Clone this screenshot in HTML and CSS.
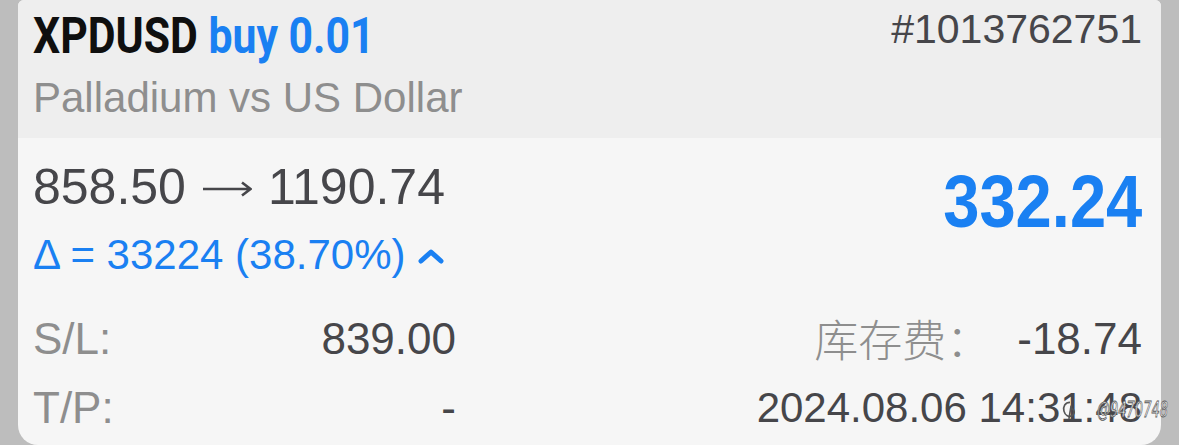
FILE: index.html
```html
<!DOCTYPE html>
<html lang="zh-CN">
<head>
    <meta charset="UTF-8">
    <title>XPDUSD</title>
    <link rel="stylesheet" href="styles.css">
</head>
<body>
    <div class="card">
        <div class="head">
            <div class="head-top">
                <div class="title"><span class="sym">XPDUSD</span> <span class="side">buy 0.01</span></div>
                <div class="ticket">#1013762751</div>
            </div>
            <div class="desc">Palladium vs US Dollar</div>
        </div>

        <div class="body">
            <div class="prices">
                <div class="left">
                    <div class="range">
                        <span>858.50</span>
                        <svg class="arrow" width="50" height="16" viewBox="0 0 50 16">
                            <path d="M1 8 H48 M40 1.5 L48.5 8 L40 14.5" fill="none" stroke="#46464a" stroke-width="2.6" stroke-linejoin="miter"/>
                        </svg>
                        <span>1190.74</span>
                    </div>
                    <div class="delta">
                        Δ = 33224 (38.70%)
                        <svg class="caret" width="26" height="16" viewBox="0 0 26 16">
                            <polyline points="3,13 13,4 23,13" fill="none" stroke="#1a80f2" stroke-width="5" stroke-linecap="round" stroke-linejoin="round"/>
                        </svg>
                    </div>
                </div>
                <div class="profit">332.24</div>
            </div>

            <div class="rows">
                <div class="row">
                    <div class="pair">
                        <span class="label">S/L:</span>
                        <span class="value">839.00</span>
                    </div>
                    <div class="extra">
                        <span class="label cjk">库存费：</span>
                        <span class="value">-18.74</span>
                    </div>
                </div>
                <div class="row">
                    <div class="pair">
                        <span class="label">T/P:</span>
                        <span class="value">-</span>
                    </div>
                    <div class="extra">
                        <span class="value date">2024.08.06 14:31:48</span>
                    </div>
                </div>
            </div>
        </div>
    </div>

    <!-- marca d'agua -->
    <div class="mark">
        <svg width="18" height="22" viewBox="0 0 16 20">
            <path d="M8 3 C3.5 3 1.5 7 2.5 11 C3.5 15 7 17 10 15 C13 13 12 9 9 9" fill="none" stroke="#555" stroke-width="1.5"/>
            <path d="M7 18 L9 6" fill="none" stroke="#555" stroke-width="1.5"/>
        </svg>
        <span class="mark-text">@9470748</span>
    </div>
</body>
</html>
```

FILE: styles.css
```css
html, body {
    margin: 0;
    height: 445px;
    overflow: hidden;
}
body {
    position: relative;
    background-color: #bdbdbd;
    font-family: "Liberation Sans", "Noto Sans CJK SC", sans-serif;
    color: #46464a;
}
.card {
    margin: 0 18px;
    height: 445px;
    background-color: #f6f6f6;
    border-radius: 6px 6px 20px 20px;
    overflow: hidden;
}
.head {
    background-color: #eeeeee;
    height: 138px;
    padding: 0 19px 0 15px;
    box-sizing: border-box;
}
.head-top {
    display: flex;
    justify-content: space-between;
    align-items: flex-start;
}
.title {
    margin-top: 6px;
    font-family: Roboto, sans-serif;
    font-weight: bold;
    font-size: 50px;
    line-height: 60px;
    white-space: nowrap;
    transform: scaleX(0.855);
    transform-origin: left;
    color: #0f0f0f;
}
.side {
    color: #1a80f2;
}
.ticket {
    margin-top: 4px;
    font-size: 41px;
    line-height: 50px;
}
.desc {
    margin-top: 7px;
    font-size: 42px;
    line-height: 50px;
    color: #8e8e8e;
}
.body {
    padding: 0 19px 0 15px;
}
.prices {
    display: flex;
    justify-content: space-between;
    align-items: flex-start;
}
.range {
    margin-top: 21px;
    font-size: 50px;
    line-height: 56px;
    display: flex;
    align-items: center;
    gap: 16px;
}
.arrow {
    margin-top: 4px;
}
.delta {
    margin-top: 15px;
    font-size: 42px;
    line-height: 50px;
    color: #1a80f2;
    display: flex;
    align-items: center;
    gap: 13px;
}
.caret {
    margin-top: 2px;
}
.profit {
    margin-top: 24px;
    font-size: 74px;
    line-height: 80px;
    font-weight: bold;
    color: #1a80f2;
    transform: scaleX(0.88);
    transform-origin: right;
}
.rows {
    margin-top: 24px;
}
.row {
    display: flex;
    font-size: 44px;
    line-height: 69px;
}
.pair {
    width: 423px;
    display: flex;
    justify-content: space-between;
}
.extra {
    margin-left: auto;
    display: flex;
    gap: 27px;
}
.label {
    color: #8e8e8e;
}
.cjk {
    font-family: "Noto Sans CJK SC", sans-serif;
    font-weight: 300;
}
.date {
    font-size: 42px;
}
.mark {
    position: absolute;
    left: 1061px;
    top: 398px;
    display: flex;
    align-items: center;
    gap: 18px;
}
.mark-text {
    display: inline-block;
    font-family: "DejaVu Sans", sans-serif;
    font-style: italic;
    font-size: 21px;
    color: #ffffff;
    -webkit-text-stroke: 0.8px #555;
    transform: scaleX(0.62);
    transform-origin: left;
}
```
